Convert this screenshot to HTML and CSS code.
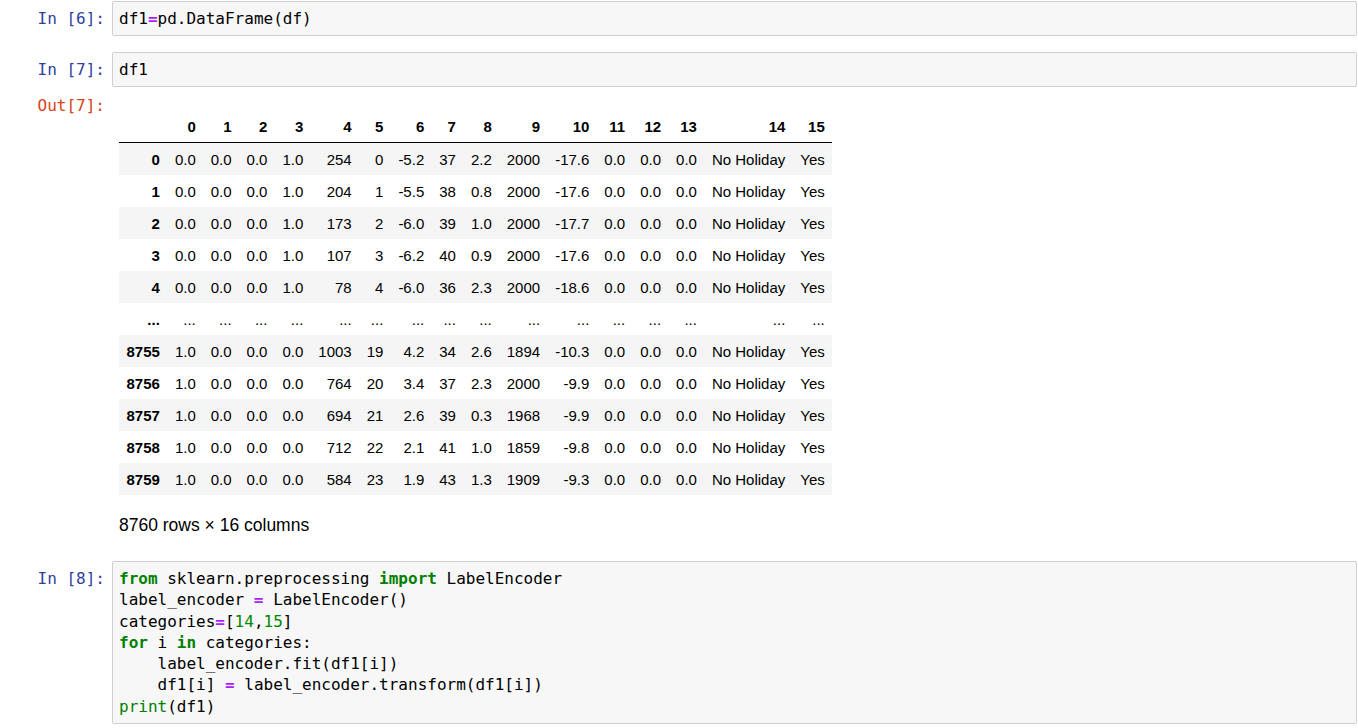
FILE: index.html
```html
<!DOCTYPE html>
<html>
<head>
<meta charset="utf-8">
<title>Notebook</title>
<link rel="stylesheet" href="styles.css">
</head>
<body>
<div class="notebook">

  <div class="cell cell-first">
    <div class="prompt in-prompt">In&nbsp;[6]:</div>
    <div class="input-area"><pre class="code">df1<span class="op">=</span>pd.DataFrame(df)</pre></div>
  </div>

  <div class="cell cell-gap">
    <div class="prompt in-prompt">In&nbsp;[7]:</div>
    <div class="input-area"><pre class="code">df1</pre></div>
  </div>

  <div class="output">
    <div class="prompt out-prompt">Out[7]:</div>
    <div class="output-sub">
      <table class="dataframe">
        <thead>
          <tr><th></th><th>0</th><th>1</th><th>2</th><th>3</th><th>4</th><th>5</th><th>6</th><th>7</th><th>8</th><th>9</th><th>10</th><th>11</th><th>12</th><th>13</th><th>14</th><th>15</th></tr>
        </thead>
        <tbody>
          <tr><th>0</th><td>0.0</td><td>0.0</td><td>0.0</td><td>1.0</td><td>254</td><td>0</td><td>-5.2</td><td>37</td><td>2.2</td><td>2000</td><td>-17.6</td><td>0.0</td><td>0.0</td><td>0.0</td><td>No Holiday</td><td>Yes</td></tr>
          <tr><th>1</th><td>0.0</td><td>0.0</td><td>0.0</td><td>1.0</td><td>204</td><td>1</td><td>-5.5</td><td>38</td><td>0.8</td><td>2000</td><td>-17.6</td><td>0.0</td><td>0.0</td><td>0.0</td><td>No Holiday</td><td>Yes</td></tr>
          <tr><th>2</th><td>0.0</td><td>0.0</td><td>0.0</td><td>1.0</td><td>173</td><td>2</td><td>-6.0</td><td>39</td><td>1.0</td><td>2000</td><td>-17.7</td><td>0.0</td><td>0.0</td><td>0.0</td><td>No Holiday</td><td>Yes</td></tr>
          <tr><th>3</th><td>0.0</td><td>0.0</td><td>0.0</td><td>1.0</td><td>107</td><td>3</td><td>-6.2</td><td>40</td><td>0.9</td><td>2000</td><td>-17.6</td><td>0.0</td><td>0.0</td><td>0.0</td><td>No Holiday</td><td>Yes</td></tr>
          <tr><th>4</th><td>0.0</td><td>0.0</td><td>0.0</td><td>1.0</td><td>78</td><td>4</td><td>-6.0</td><td>36</td><td>2.3</td><td>2000</td><td>-18.6</td><td>0.0</td><td>0.0</td><td>0.0</td><td>No Holiday</td><td>Yes</td></tr>
          <tr><th>...</th><td>...</td><td>...</td><td>...</td><td>...</td><td>...</td><td>...</td><td>...</td><td>...</td><td>...</td><td>...</td><td>...</td><td>...</td><td>...</td><td>...</td><td>...</td><td>...</td></tr>
          <tr><th>8755</th><td>1.0</td><td>0.0</td><td>0.0</td><td>0.0</td><td>1003</td><td>19</td><td>4.2</td><td>34</td><td>2.6</td><td>1894</td><td>-10.3</td><td>0.0</td><td>0.0</td><td>0.0</td><td>No Holiday</td><td>Yes</td></tr>
          <tr><th>8756</th><td>1.0</td><td>0.0</td><td>0.0</td><td>0.0</td><td>764</td><td>20</td><td>3.4</td><td>37</td><td>2.3</td><td>2000</td><td>-9.9</td><td>0.0</td><td>0.0</td><td>0.0</td><td>No Holiday</td><td>Yes</td></tr>
          <tr><th>8757</th><td>1.0</td><td>0.0</td><td>0.0</td><td>0.0</td><td>694</td><td>21</td><td>2.6</td><td>39</td><td>0.3</td><td>1968</td><td>-9.9</td><td>0.0</td><td>0.0</td><td>0.0</td><td>No Holiday</td><td>Yes</td></tr>
          <tr><th>8758</th><td>1.0</td><td>0.0</td><td>0.0</td><td>0.0</td><td>712</td><td>22</td><td>2.1</td><td>41</td><td>1.0</td><td>1859</td><td>-9.8</td><td>0.0</td><td>0.0</td><td>0.0</td><td>No Holiday</td><td>Yes</td></tr>
          <tr><th>8759</th><td>1.0</td><td>0.0</td><td>0.0</td><td>0.0</td><td>584</td><td>23</td><td>1.9</td><td>43</td><td>1.3</td><td>1909</td><td>-9.3</td><td>0.0</td><td>0.0</td><td>0.0</td><td>No Holiday</td><td>Yes</td></tr>
        </tbody>
      </table>
      <p class="shape">8760 rows × 16 columns</p>
    </div>
  </div>

  <div class="cell cell-after-output">
    <div class="prompt in-prompt">In&nbsp;[8]:</div>
    <div class="input-area"><pre class="code"><span class="kw">from</span> sklearn.preprocessing <span class="kw">import</span> LabelEncoder
label_encoder <span class="op">=</span> LabelEncoder()
categories<span class="op">=</span>[<span class="num">14</span>,<span class="num">15</span>]
<span class="kw">for</span> i <span class="kw">in</span> categories:
    label_encoder.fit(df1[i])
    df1[i] <span class="op">=</span> label_encoder.transform(df1[i])
<span class="bi">print</span>(df1)</pre></div>
  </div>

</div>
</body>
</html>
```

FILE: styles.css
```css
html, body {
  margin: 0;
  padding: 0;
  background: #ffffff;
}

.notebook {
  padding-right: 1px;
  font-family: "Liberation Sans", Arial, sans-serif;
  color: #000;
}

.cell {
  display: flex;
  align-items: flex-start;
}

.cell-first {
  padding-top: 1px;
}

.cell-gap {
  margin-top: 15.75px;
}

.cell-after-output {
  margin-top: 23px;
}

.prompt {
  flex: 0 0 112px;
  box-sizing: border-box;
  padding: 7px 7px 0 0;
  text-align: right;
  font-family: "DejaVu Sans Mono", "Liberation Mono", monospace;
  font-size: 16px;
  line-height: 21.25px;
  white-space: nowrap;
}

.in-prompt {
  color: #303F9F;
}

.out-prompt {
  color: #D84315;
  padding-top: 8px;
}

.input-area {
  flex: 1 1 auto;
  min-width: 0;
  border: 1px solid #cfcfcf;
  border-radius: 2px;
  background: #f7f7f7;
}

.code {
  margin: 0;
  padding: 6px 6px;
  font-family: "DejaVu Sans Mono", "Liberation Mono", monospace;
  font-size: 16px;
  line-height: 21.25px;
  color: #000;
  white-space: pre;
}

.kw {
  color: #008000;
  font-weight: bold;
}

.op {
  color: #AA22FF;
  font-weight: bold;
}

.num {
  color: #080;
}

.bi {
  color: #008000;
}

.output {
  display: flex;
  align-items: flex-start;
}

.output-sub {
  flex: 1 1 auto;
  padding: 8px 7px 0 7px;
}

.dataframe {
  margin-top: 14.75px;
  border-collapse: collapse;
  border-spacing: 0;
  border: none;
  font-size: 15px;
  color: #000;
}

.dataframe thead {
  border-bottom: 1px solid #000;
  vertical-align: bottom;
}

.dataframe th,
.dataframe td {
  text-align: right;
  vertical-align: middle;
  padding: 7.5px 7.5px;
  line-height: 17px;
  white-space: nowrap;
  border: none;
}

.dataframe th {
  font-weight: bold;
}

.dataframe tbody tr:nth-child(odd) {
  background: #f5f5f5;
}

.shape {
  margin: 18px 0 0 0;
  font-size: 17.5px;
  line-height: 25px;
}
```
